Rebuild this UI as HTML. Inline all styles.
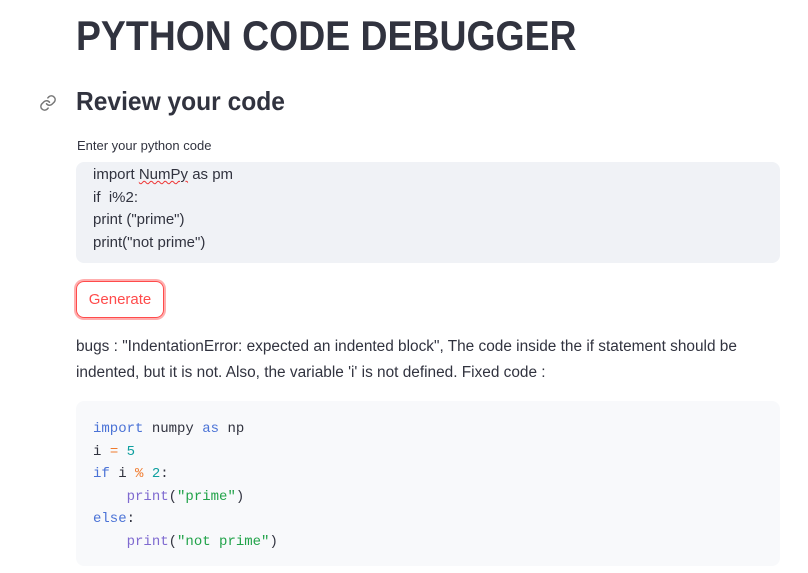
<!DOCTYPE html>
<html><head><meta charset="utf-8"><style>
body{margin:0;background:#fff;font-family:"Liberation Sans",sans-serif;color:#31333f;width:808px;height:573px;overflow:hidden;position:relative}
.a{position:absolute}
h1{position:absolute;left:76px;top:12px;margin:0;font-size:42px;font-weight:bold;color:#31333f;transform:scaleX(0.89);transform-origin:left top;white-space:nowrap}
h2{position:absolute;left:76px;top:86px;margin:0;font-size:26px;font-weight:bold;transform:scaleX(0.945);transform-origin:left top;white-space:nowrap}
.lbl{left:77px;top:138px;font-size:13px}
.ta{left:76px;top:162px;width:704px;height:101px;background:#f0f2f6;border-radius:8px}
.ta div{position:absolute;left:17px;top:2px;font-size:15px;line-height:22.5px}
.btn{left:76px;top:281px;width:86px;height:35px;border:1px solid #ff4b4b;border-radius:8px;box-shadow:0 0 0 2px rgba(255,75,75,.45);color:#ff4b4b;font-size:15px;text-align:center;line-height:35px}
.p{left:76px;top:334px;width:710px;font-size:15.4px;line-height:26px;white-space:nowrap}
.code{left:76px;top:401px;width:704px;height:165px;background:#f8f9fb;border-radius:8px}
.code pre{position:absolute;left:17px;top:17px;margin:0;font-family:"Liberation Mono",monospace;font-size:14px;line-height:22.5px;color:#31333f}
.k{color:#4a72d6}.n{color:#0e9f9f}.o{color:#f07a2c}.s{color:#22a34a}.f{color:#7f6ad0}
</style></head><body>
<h1>PYTHON CODE DEBUGGER</h1>
<svg class="a" style="left:39px;top:94px" width="18" height="18" viewBox="0 0 24 24" fill="none" stroke="#777" stroke-width="2" stroke-linecap="round"><path d="M10 13a5 5 0 0 0 7.5.5l3-3a5 5 0 0 0-7-7l-1.7 1.7"/><path d="M14 11a5 5 0 0 0-7.5-.5l-3 3a5 5 0 0 0 7 7l1.7-1.7"/></svg>
<h2>Review your code</h2>
<div class="a lbl">Enter your python code</div>
<div class="a ta"><div>import <span style="text-decoration:underline wavy #e33;text-decoration-thickness:1px">NumPy</span> as pm<br>if &nbsp;i%2:<br>print ("prime")<br>print("not prime")</div></div>
<div class="a btn">Generate</div>
<div class="a p">bugs : "IndentationError: expected an indented block", The code inside the if statement should be<br>indented, but it is not. Also, the variable 'i' is not defined. Fixed code :</div>
<div class="a code"><pre><span class="k">import</span> numpy <span class="k">as</span> np
i <span class="o">=</span> <span class="n">5</span>
<span class="k">if</span> i <span class="o">%</span> <span class="n">2</span>:
    <span class="f">print</span>(<span class="s">"prime"</span>)
<span class="k">else</span>:
    <span class="f">print</span>(<span class="s">"not prime"</span>)</pre></div>
</body></html>
